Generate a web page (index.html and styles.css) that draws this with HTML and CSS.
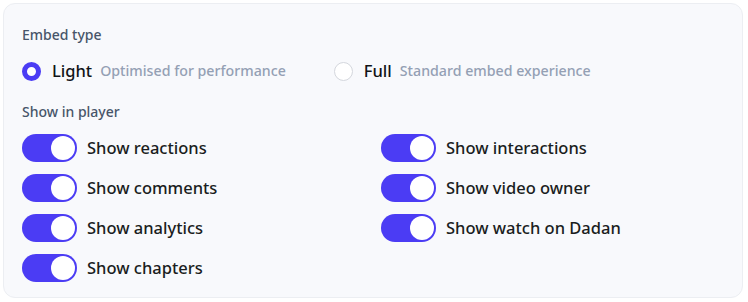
FILE: index.html
```html
<!DOCTYPE html>
<html>
<head>
<meta charset="utf-8">
<link rel="stylesheet" href="styles.css">
</head>
<body>
<div class="card">
  <div class="label">Embed type</div>
  <div class="radios">
    <label class="radio-opt">
      <span class="radio checked"></span>
      <span class="radio-title">Light</span>
      <span class="radio-desc">Optimised for performance</span>
    </label>
    <label class="radio-opt">
      <span class="radio"></span>
      <span class="radio-title">Full</span>
      <span class="radio-desc">Standard embed experience</span>
    </label>
  </div>
  <div class="label">Show in player</div>
  <div class="toggles">
    <div class="toggle-row"><span class="toggle"><span class="knob"></span></span><span class="toggle-text">Show reactions</span></div>
    <div class="toggle-row"><span class="toggle"><span class="knob"></span></span><span class="toggle-text">Show interactions</span></div>
    <div class="toggle-row"><span class="toggle"><span class="knob"></span></span><span class="toggle-text">Show comments</span></div>
    <div class="toggle-row"><span class="toggle"><span class="knob"></span></span><span class="toggle-text">Show video owner</span></div>
    <div class="toggle-row"><span class="toggle"><span class="knob"></span></span><span class="toggle-text">Show analytics</span></div>
    <div class="toggle-row"><span class="toggle"><span class="knob"></span></span><span class="toggle-text">Show watch on Dadan</span></div>
    <div class="toggle-row"><span class="toggle"><span class="knob"></span></span><span class="toggle-text">Show chapters</span></div>
  </div>
</div>
</body>
</html>
```
FILE: styles.css
```css
* { box-sizing: border-box; }
html, body { margin: 0; padding: 0; background: #ffffff; }
body {
  padding: 3px 5px 4px 3px;
  font-family: "Noto Sans", "Open Sans", sans-serif;
  color: #1f2328;
}
.card {
  width: 740px;
  height: 295px;
  background: #f8f9fc;
  border: 1px solid #eceef2;
  border-radius: 12px;
  padding: 21px 18px 16px 18px;
}
.label {
  font-size: 14px;
  line-height: 20px;
  color: #475569;
  font-weight: 500;
}
.radios {
  display: flex;
  align-items: center;
  gap: 48px;
  height: 24px;
  margin-top: 14px;
  margin-bottom: 19px;
}
.radio-opt {
  display: flex;
  align-items: center;
}
.radio {
  width: 19px;
  height: 19px;
  border-radius: 50%;
  background: #fff;
  border: 1px solid #d4d7dd;
  margin-right: 11px;
}
.radio.checked {
  border: 5.5px solid #4b3cf4;
  background: #fff;
}
.radio-title {
  font-size: 16.5px;
  line-height: 24px;
  color: #111418;
  font-weight: 500;
  margin-right: 8px;
}
.radio-desc {
  font-size: 14.2px;
  line-height: 20px;
  color: #94a0b4;
  font-weight: 500;
}
.toggles {
  display: grid;
  grid-template-columns: 343px 343px;
  column-gap: 16px;
  row-gap: 12px;
  margin-top: 12px;
}
.toggle-row {
  display: flex;
  align-items: center;
  height: 28px;
}
.toggle {
  width: 55px;
  height: 28px;
  border-radius: 14px;
  background: #4b3cf4;
  display: flex;
  align-items: center;
  justify-content: flex-end;
  padding: 0 2px;
  margin-right: 10px;
}
.knob {
  width: 24px;
  height: 24px;
  border-radius: 50%;
  background: #fff;
}
.toggle-text {
  font-size: 16.5px;
  line-height: 24px;
  color: #1a1d21;
  font-weight: 500;
}
```
